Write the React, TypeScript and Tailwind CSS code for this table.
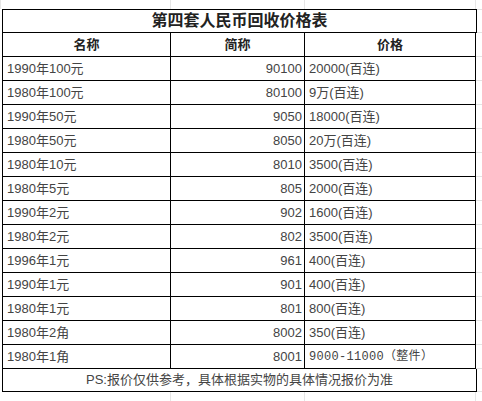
const rows: [string, string, string][] = [
  ["1990年100元", "90100", "20000(百连)"],
  ["1980年100元", "80100", "9万(百连)"],
  ["1990年50元", "9050", "18000(百连)"],
  ["1980年50元", "8050", "20万(百连)"],
  ["1980年10元", "8010", "3500(百连)"],
  ["1980年5元", "805", "2000(百连)"],
  ["1990年2元", "902", "1600(百连)"],
  ["1980年2元", "802", "3500(百连)"],
  ["1996年1元", "961", "400(百连)"],
  ["1990年1元", "901", "400(百连)"],
  ["1980年1元", "801", "800(百连)"],
  ["1980年2角", "8002", "350(百连)"],
]

const font = "font-['Liberation_Sans','Noto_Sans_CJK_SC',sans-serif]"

const Spacer = () => <div className="flex-1 h-full border-b border-[#e3e3e3]" />

const App = () => {
  return (
    <div className={`w-[482px] h-[401px] bg-white overflow-hidden text-[#444] ${font}`}>
      {/* faint sheet grid above the table */}
      <div className="flex h-[9px]">
        <div className="w-[2px] border-l border-[#e6e6e6]" />
        <div className="w-[169px] border-r border-[#e6e6e6]" />
        <div className="w-[134px] border-r border-[#e6e6e6]" />
        <div className="w-[171px] border-r border-[#e6e6e6]" />
      </div>

      <div className="flex flex-col">
        <div className="flex h-[24px]">
          <div className="w-[2px]" />
          <div className="w-[475px] border border-black flex items-center justify-center text-[16px] font-bold text-[#222]">
            第四套人民币回收价格表
          </div>
          <div className="flex-1 h-full border-y border-[#e3e3e3]" />
        </div>

        <div className="flex h-[24px]">
          <div className="w-[2px]" />
          <div className="w-[169px] border-l border-b border-r border-black flex items-center justify-center text-[13px] font-bold text-[#222]">
            名称
          </div>
          <div className="w-[134px] border-b border-r border-black flex items-center justify-center text-[13px] font-bold text-[#222]">
            简称
          </div>
          <div className="w-[171px] border-b border-r border-black flex items-center justify-center text-[13px] font-bold text-[#222]">
            价格
          </div>
          <Spacer />
        </div>

        {rows.map(([name, code, price]) => (
          <div key={name} className="flex h-[24px] text-[13px]">
            <div className="w-[2px]" />
            <div className="w-[169px] border-l border-b border-r border-black flex items-center pl-[4px]">{name}</div>
            <div className="w-[134px] border-b border-r border-black flex items-center justify-end pr-[2px]">{code}</div>
            <div className="w-[171px] border-b border-r border-black flex items-center pl-[4px]">{price}</div>
            <Spacer />
          </div>
        ))}

        <div className="flex h-[24px] text-[13px]">
          <div className="w-[2px]" />
          <div className="w-[169px] border-l border-b border-r border-black flex items-center pl-[4px]">1980年1角</div>
          <div className="w-[134px] border-b border-r border-black flex items-center justify-end pr-[2px]">8001</div>
          <div className="w-[171px] border-b border-r border-black flex items-center pl-[4px] text-[12px] tracking-[0.3px] font-['Liberation_Mono','Noto_Sans_CJK_SC',monospace]">
            9000-11000（整件）
          </div>
          <Spacer />
        </div>

        <div className="flex h-[23px] text-[13px]">
          <div className="w-[2px]" />
          <div className="w-[475px] border-l border-b border-r border-black flex items-center justify-center">
            PS:报价仅供参考，具体根据实物的具体情况报价为准
          </div>
          <Spacer />
        </div>
      </div>

      {/* faint sheet grid below the table */}
      <div className="flex h-[9px]">
        <div className="w-[2px]" />
        <div className="w-[169px] border-r border-[#e6e6e6]" />
        <div className="w-[134px] border-r border-[#e6e6e6]" />
        <div className="w-[171px] border-r border-[#e6e6e6]" />
      </div>
    </div>
  )
}

export default App
